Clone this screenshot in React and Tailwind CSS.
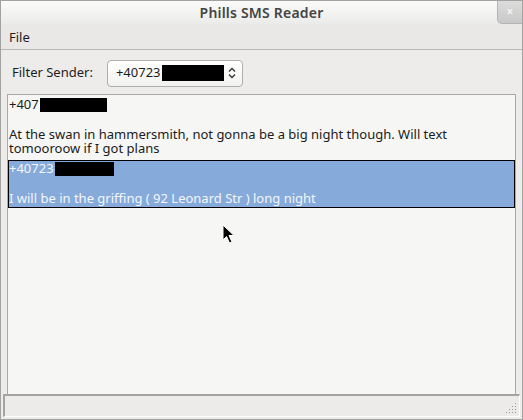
import React from 'react'

const font = { fontFamily: '"Noto Sans", "DejaVu Sans", sans-serif' }

function Redact({ w }) {
  return <span className={`inline-block bg-black h-[14px] ml-[1px] ${w}`} />
}

function Cursor() {
  return (
    <svg className="absolute left-[221px] top-[223px]" width="14" height="21" viewBox="0 0 14 21">
      <path d="M1 1 L1 16 L4.5 12.5 L7.5 19 L10 18 L7 11.5 L12 11.5 Z" fill="#000" stroke="#fff" strokeWidth="1" />
    </svg>
  )
}

export default function App() {
  return (
    <div className="relative w-[523px] h-[420px] bg-[#edecea] border border-[#a2a2a0] flex flex-col text-[#1c1c1c]" style={font}>
      {/* title bar */}
      <div className="relative h-[23px] shrink-0 bg-gradient-to-b from-[#fbfbfb] to-[#ebebe9] flex items-center justify-center">
        <span className="text-[14px] font-semibold text-[#444] tracking-[0.2px]">Phills SMS Reader</span>
        <div className="absolute right-0 top-0 w-[25px] h-[23px] rounded-bl-[5px] bg-gradient-to-b from-[#dcdcdc] to-[#c8c8c8] border-l border-b border-[#b4b4b4] flex items-center justify-center">
          <span className="text-[#f4f4f4] text-[12px] font-bold leading-none">×</span>
        </div>
      </div>
      {/* menu */}
      <div className="h-[26px] shrink-0 flex items-center px-[8px] pt-[2px] border-b border-[#b8b8b6] bg-[#e9e8e6]">
        <span className="text-[13px]">File</span>
      </div>
      {/* filter row */}
      <div className="h-[44px] shrink-0 flex items-center pl-[11px] pt-[2px] gap-[14px]">
        <span className="text-[13px]">Filter Sender:</span>
        <div className="w-[136px] h-[27px] rounded-[4px] border border-[#b0afac] bg-gradient-to-b from-[#ffffff] to-[#f2f2f0] flex items-center pl-[8px] pr-[6px]">
          <span className="text-[13px]">+40723</span>
          <span className="inline-block bg-black w-[62px] h-[16px] ml-[1px]" />
          <svg className="ml-auto" width="8" height="12" viewBox="0 0 8 12">
            <path d="M1 4.5 L4 1.5 L7 4.5 M1 7.5 L4 10.5 L7 7.5" fill="none" stroke="#333" strokeWidth="1.3" />
          </svg>
        </div>
      </div>
      {/* list */}
      <div className="mx-[6px] flex-1 border-t border-x border-[#a8a8a6] bg-[#f6f6f4] pt-[2px] text-[13px]">
        <div className="px-[1px]">
          <div className="flex items-center h-[15px]">+407<Redact w="w-[67px]" /></div>
          <div className="h-[15px]" />
          <div className="pr-[40px] leading-[14px]">At the swan in hammersmith, not gonna be a big night though. Will text tomooroow if I got plans</div>
        </div>
        <div className="mt-[5px] border border-black bg-[#86aada] text-[#f4f6fa] leading-[15px]">
          <div className="flex items-center h-[15px]">+40723<Redact w="w-[59px]" /></div>
          <div className="h-[15px]" />
          <div className="h-[16px]">I will be in the griffing ( 92 Leonard Str ) long night</div>
        </div>
      </div>
      {/* status bar */}
      <div className="relative h-[23px] mx-[2px] mb-[2px] shrink-0 border-t-2 border-l-2 border-[#a3a3a1] border-b border-r border-b-white border-r-white bg-[#ecebe9]">
        <svg className="absolute right-[2px] bottom-[2px]" width="12" height="12" viewBox="0 0 12 12">
          {[[10, 1], [10, 4], [7, 4], [10, 7], [7, 7], [4, 7], [10, 10], [7, 10], [4, 10], [1, 10]].map(([x, y], i) => (
            <rect key={i} x={x} y={y} width="1" height="1" fill="#9a9a98" />
          ))}
        </svg>
      </div>
      <Cursor />
    </div>
  )
}
